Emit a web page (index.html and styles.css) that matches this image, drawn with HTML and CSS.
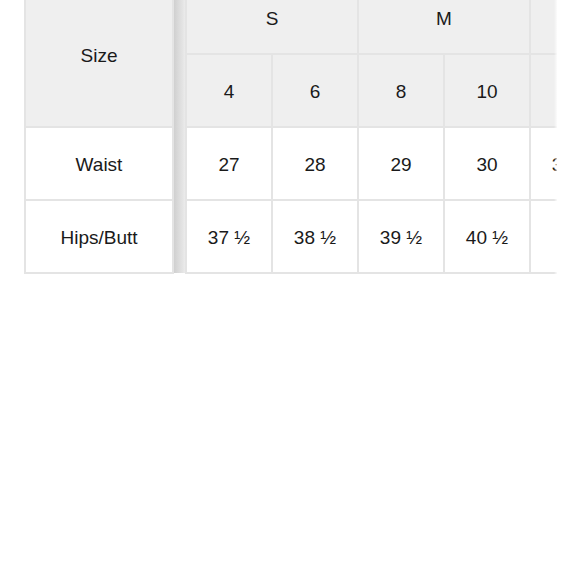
FILE: index.html
```html
<!DOCTYPE html>
<html>
<head>
<meta charset="utf-8">
<link rel="stylesheet" href="styles.css">
</head>
<body>
<div class="chart">
  <table class="frozen">
    <tr><td class="head tall" rowspan="2">Size</td></tr>
    <tr></tr>
    <tr><td>Waist</td></tr>
    <tr><td>Hips/Butt</td></tr>
  </table>
  <div class="shade"></div>
  <div class="viewport">
    <table class="sizes">
      <tr>
        <td class="head" colspan="2">S</td>
        <td class="head" colspan="2">M</td>
        <td class="head last"></td>
      </tr>
      <tr>
        <td class="head">4</td>
        <td class="head">6</td>
        <td class="head">8</td>
        <td class="head">10</td>
        <td class="head last"></td>
      </tr>
      <tr>
        <td>27</td><td>28</td><td>29</td><td>30</td><td class="last">31 ½</td>
      </tr>
      <tr>
        <td>37 ½</td><td>38 ½</td><td>39 ½</td><td>40 ½</td><td class="last"></td>
      </tr>
    </table>
    <div class="edge"></div>
  </div>
</div>
</body>
</html>
```
FILE: styles.css
```css
html, body {
  margin: 0;
  padding: 0;
  background: #ffffff;
}

body {
  font-family: "Liberation Sans", Arial, sans-serif;
  font-size: 19px;
  color: #1a1a1a;
}

.chart {
  display: flex;
  align-items: flex-start;
  margin: -20px 0 0 24px;
}

table {
  border-spacing: 0;
  border-top: 2px solid #e4e4e4;
}

td {
  height: 69px;
  padding: 2px 0 0 0;
  text-align: center;
  vertical-align: middle;
  border-right: 2px solid #e4e4e4;
  border-bottom: 2px solid #e4e4e4;
  white-space: nowrap;
}

.head {
  background: #efefef;
}

.frozen td {
  width: 146px;
  border-left: 2px solid #e4e4e4;
}

.frozen .tall {
  height: 140px;
  padding-top: 4px;
}

.frozen tr:nth-child(2) {
  height: 0;
}

.shade {
  width: 11px;
  height: 293px;
  flex: none;
  background: linear-gradient(to right, #d0d0d0 0%, #d9d9d9 35%, #e3e3e3 75%, #ebebeb 100%);
}

.viewport {
  position: relative;
  width: 372px;
  flex: none;
  overflow: hidden;
}

.sizes {
  width: max-content;
  border-left: 2px solid #e4e4e4;
}

.sizes td {
  width: 84px;
}

.edge {
  position: absolute;
  top: 0;
  right: 0;
  width: 3px;
  height: 100%;
  background: linear-gradient(to right, rgba(255,255,255,0), rgba(255,255,255,0.8));
}
```
